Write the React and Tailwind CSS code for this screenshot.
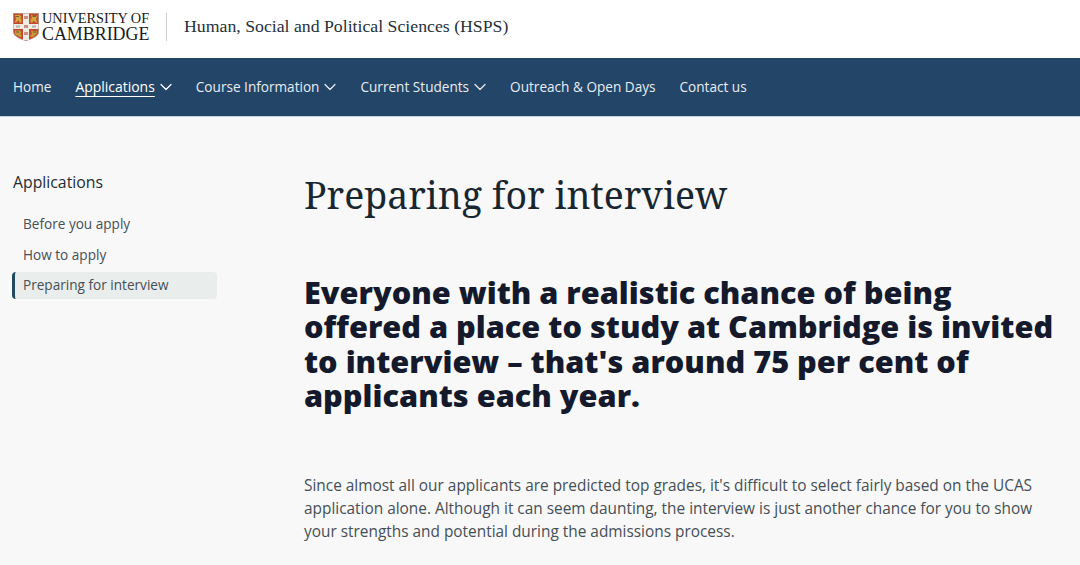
import { ChevronDown } from "lucide-react";

function Crest() {
  return (
    <svg width="26" height="28" viewBox="0 0 26 28" className="shrink-0">
      {/* shield */}
      <path d="M0.3 0.3H25.7V18.5C25.7 23.5 19 26 13 27.7C7 26 0.3 23.5 0.3 18.5Z" fill="#bf4a30" stroke="#a09f92" strokeWidth="0.5" />
      {/* ermine cross */}
      <path d="M10 0.5H16V27H10Z" fill="#efece4" />
      <path d="M0.5 11H25.5V16H0.5Z" fill="#efece4" />
      <path d="M11 3H15V6H11ZM11 12H15V15H11ZM11 19H15V22H11Z" fill="#a8452f" opacity="0.55" />
      <path d="M3 12.5H7V14.5H3ZM19 12.5H23V14.5H19Z" fill="#8d8a7e" opacity="0.6" />
      {/* lions */}
      <path d="M2 2H5L6 1.5L8.5 3.5L7 5.5H8.5V9.5H6.5L5.5 7.5L3 9.5H1.5L3 6.5Z" fill="#d6a63c" />
      <path d="M18 1.5L20 3H23L24.5 2L23 6.5L24.5 9.5H22.5L20.5 7.5L19.5 9.5H17.5V5.5H19Z" fill="#d6a63c" />
      <path d="M2 17.5H5L6.5 17L8.5 19.5L7 21.5H8.5V24H6L5 22.5L3 22.5L1.8 20.5Z" fill="#c8983a" />
      <path d="M18 17L20 18H23L24 17.5L23.5 20.5L21.5 23L20 24H17.5V21.5H19Z" fill="#c8983a" />
      <path d="M2.5 3.5H6M19.5 3.5H23M3 19H6M20 19H23" stroke="#4a4238" strokeWidth="0.7" />
    </svg>
  );
}

const serif = "font-['Liberation_Serif',serif]";

export default function App() {
  return (
    <div className="h-[565px] w-[1080px] overflow-hidden bg-[#f8f8f8] font-['Open_Sans',sans-serif] text-[#454f56]">
      <header className="flex h-[58px] items-center bg-white pb-[5px] pl-[13px]">
        <Crest />
        <div className={`ml-[3px] w-[110px] text-[#1a1a1a] ${serif}`}>
          <div className="text-[14.3px] leading-[15px] whitespace-nowrap">UNIVERSITY OF</div>
          <div className="text-[17.9px] leading-[16px] whitespace-nowrap">CAMBRIDGE</div>
        </div>
        <div className="ml-[14px] h-[28px] w-px bg-[#c9cfd3]" />
        <div className={`ml-[17px] text-[17.75px] text-[#25313a] ${serif}`}>
          Human, Social and Political Sciences (HSPS)
        </div>
      </header>

      <nav className="flex h-[59px] items-center border-b border-[#c6d3e0] bg-[#234568] pt-px pl-[13px] text-[13.6px] text-[#e8edf2]">
        <a>Home</a>
        <a className="ml-[24px] flex items-center text-white">
          <span className="text-[13.95px] font-medium underline underline-offset-4">Applications</span>
          <ChevronDown size={20} strokeWidth={1.5} className="ml-px" />
        </a>
        <a className="ml-[20px] flex items-center">
          Course Information
          <ChevronDown size={20} strokeWidth={1.5} className="ml-px" />
        </a>
        <a className="ml-[20px] flex items-center">
          Current Students
          <ChevronDown size={20} strokeWidth={1.5} className="ml-px" />
        </a>
        <a className="ml-[20px]">Outreach &amp; Open Days</a>
        <a className="ml-[24px]">Contact us</a>
      </nav>

      <main className="flex pl-[12px]">
        <aside className="w-[205px] shrink-0 pt-[55px]">
          <h2 className="pl-px text-[15.8px] leading-[20px] font-medium text-[#232c33]">Applications</h2>
          <ul className="mt-[19px] text-[13.6px]">
            <li className="flex h-[27px] items-center pl-[11px]">Before you apply</li>
            <li className="mt-[3.5px] flex h-[27px] items-center pl-[11px]">How to apply</li>
            <li className="mt-[3.5px] flex h-[27px] items-center rounded-sm border-l-[3px] border-[#1f4a60] bg-[#e9edec] pl-[8px]">
              Preparing for interview
            </li>
          </ul>
        </aside>
        <article className="ml-[87px] min-w-0 flex-1 pt-[51px]">
          <h1 className="font-['Noto_Serif','Liberation_Serif',serif] text-[37.4px] leading-[54px] text-[#182630]">
            Preparing for interview
          </h1>
          <p className="mt-[53px] w-[760px] text-[30.7px] leading-[34.3px] font-extrabold text-[#141a2c]">
            Everyone with a realistic chance of being offered a place to study at Cambridge is invited to interview – that's around 75 per cent of applicants each year.
          </p>
          <p className="mt-[62px] w-[750px] text-[15.4px] leading-[23px]">
            Since almost all our applicants are predicted top grades, it's difficult to select fairly based on the UCAS application alone. Although it can seem daunting, the interview is just another chance for you to show your strengths and potential during the admissions process.
          </p>
        </article>
      </main>
    </div>
  );
}
